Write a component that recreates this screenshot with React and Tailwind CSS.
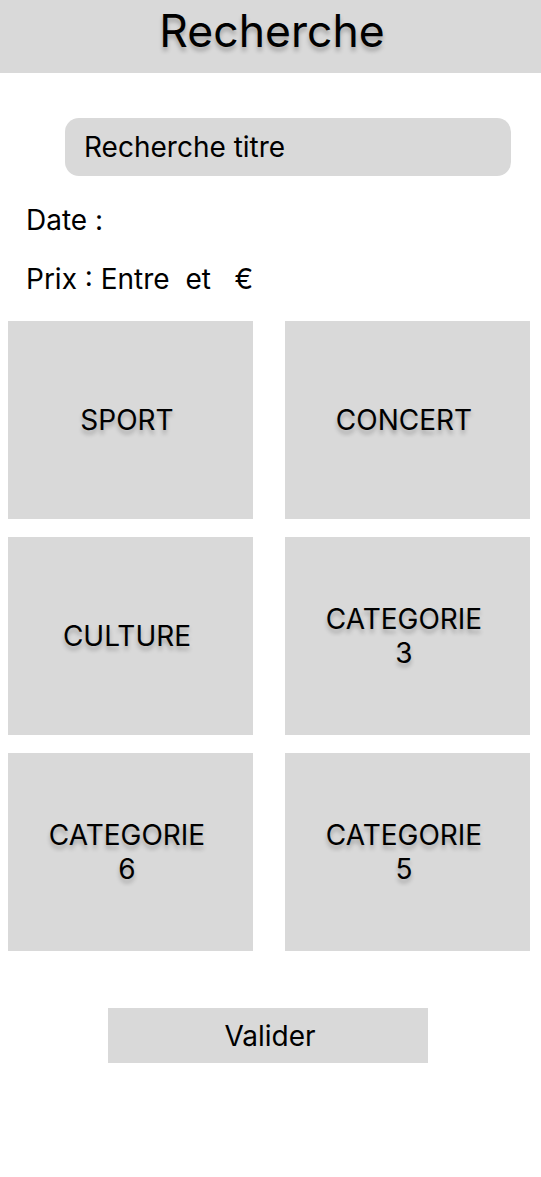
export default function App() {
  const categories = [
    ["SPORT"],
    ["CONCERT"],
    ["CULTURE"],
    ["CATEGORIE", "3"],
    ["CATEGORIE", "6"],
    ["CATEGORIE", "5"],
  ];

  return (
    <div className="w-[541px] min-h-[1177px] bg-white text-black font-['Inter',sans-serif]">
      {/* Header */}
      <div className="h-[73px] bg-[#d9d9d9] flex items-center justify-center">
        <h1 className="text-[44.5px] leading-none pl-[3px] [text-shadow:0_4px_4px_rgba(0,0,0,0.25)] mt-[-10px]">
          Recherche
        </h1>
      </div>

      {/* Search */}
      <div className="pl-[65px] pr-[30px] pt-[45px]">
        <div className="h-[58px] bg-[#d9d9d9] rounded-[14px] flex items-center pl-[19px] text-[28px]">
          Recherche titre
        </div>
      </div>

      <div className="pl-[26px] pt-[28px] text-[28px] leading-[32px]">Date :</div>
      <div className="pl-[26px] pt-[27px] text-[28px] leading-[32px] whitespace-pre">
        Prix : Entre  et   €
      </div>

      {/* Categories */}
      <div className="grid grid-cols-[245px_245px] gap-x-[32px] gap-y-[18px] pl-[8px] pt-[26px]">
        {categories.map((lines, i) => (
          <div
            key={i}
            className="h-[198px] bg-[#d9d9d9] flex flex-col items-center justify-center pr-[7px] text-[28px] leading-[34px] [text-shadow:0_4px_4px_rgba(0,0,0,0.25)]"
          >
            {lines.map((l) => (
              <span key={l}>{l}</span>
            ))}
          </div>
        ))}
      </div>

      <div className="flex pl-[108px] pt-[57px]">
        <button className="w-[320px] h-[55px] bg-[#d9d9d9] text-[28px] pl-[4px]">
          Valider
        </button>
      </div>
    </div>
  );
}
